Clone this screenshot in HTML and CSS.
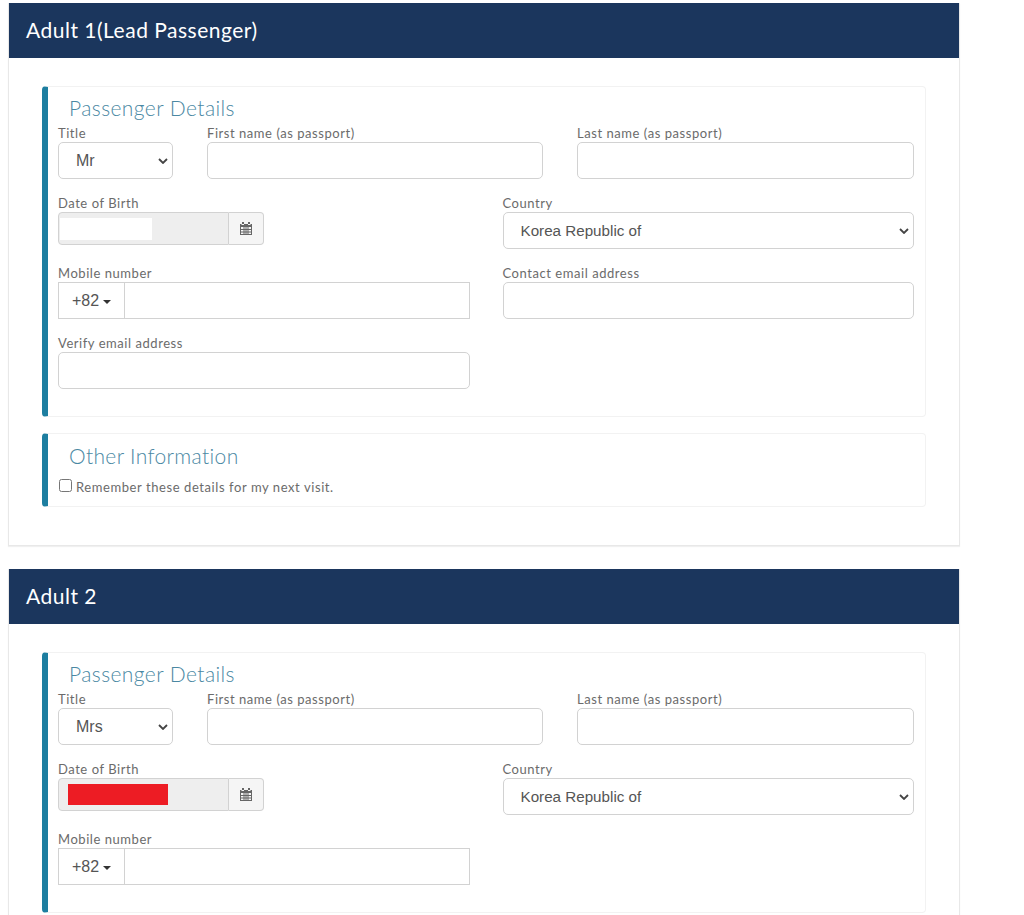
FILE: index.html
```html
<!DOCTYPE html>
<html lang="en">
<head>
  <meta charset="UTF-8" />
  <title>Passenger Details</title>
  <meta name="viewport" content="width=device-width, initial-scale=1.0" />
  <link rel="stylesheet" href="styles.css">
</head>
<body>
  <div class="card">
    <h2 class="card-title">Adult 1(Lead Passenger)</h2>
    <div class="card-body">
      <div class="panel">
        <h3>Passenger Details</h3>
        <div class="row row-name">
          <div class="field">
            <label>Title</label>
            <select class="control title-select"><option>Mr</option><option>Mrs</option></select>
          </div>
          <div class="field">
            <label>First name (as passport)</label>
            <input class="control" type="text" />
          </div>
          <div class="field">
            <label>Last name (as passport)</label>
            <input class="control" type="text" />
          </div>
        </div>
        <div class="row">
          <div class="field">
            <label>Date of Birth</label>
            <div class="date-group">
              <div class="date-input pad-small"><span class="mask mask-white"></span></div>
              <span class="date-addon">
                <svg width="12" height="13" viewBox="0 0 12 13"><path fill="#666" d="M2 0h2v2H2zM8 0h2v2H8zM0 2h1.5v1H4V2h4v1h2.5V2H12v11H0zM1 5v7h10V5z"/><path fill="#666" d="M3.5 5h1v7h-1zM5.5 5h1v7h-1zM7.5 5h1v7h-1zM1 7h10v1H1zM1 9.5h10v1H1z"/></svg>
              </span>
            </div>
          </div>
          <div class="field">
            <label>Country</label>
            <select class="control country-select"><option>Korea Republic of</option></select>
          </div>
        </div>
        <div class="row">
          <div class="field">
            <label>Mobile number</label>
            <div class="phone-group">
              <span class="phone-code">+82 <i class="caret"></i></span>
              <input type="text" />
            </div>
          </div>
          <div class="field">
            <label>Contact email address</label>
            <input class="control" type="text" />
          </div>
        </div>
        <div class="row">
          <div class="field">
            <label>Verify email address</label>
            <input class="control" type="text" />
          </div>
        </div>
      </div>

      <div class="panel panel-other">
        <h3>Other Information</h3>
        <div class="remember">
          <input type="checkbox" id="remember" />
          <label for="remember">Remember these details for my next visit.</label>
        </div>
      </div>
    </div>
  </div>

  <div class="card">
    <h2 class="card-title">Adult 2</h2>
    <div class="card-body">
      <div class="panel">
        <h3>Passenger Details</h3>
        <div class="row row-name">
          <div class="field">
            <label>Title</label>
            <select class="control title-select"><option>Mrs</option><option>Mr</option></select>
          </div>
          <div class="field">
            <label>First name (as passport)</label>
            <input class="control" type="text" />
          </div>
          <div class="field">
            <label>Last name (as passport)</label>
            <input class="control" type="text" />
          </div>
        </div>
        <div class="row">
          <div class="field">
            <label>Date of Birth</label>
            <div class="date-group">
              <div class="date-input"><span class="mask mask-red"></span></div>
              <span class="date-addon">
                <svg width="12" height="13" viewBox="0 0 12 13"><path fill="#666" d="M2 0h2v2H2zM8 0h2v2H8zM0 2h1.5v1H4V2h4v1h2.5V2H12v11H0zM1 5v7h10V5z"/><path fill="#666" d="M3.5 5h1v7h-1zM5.5 5h1v7h-1zM7.5 5h1v7h-1zM1 7h10v1H1zM1 9.5h10v1H1z"/></svg>
              </span>
            </div>
          </div>
          <div class="field">
            <label>Country</label>
            <select class="control country-select"><option>Korea Republic of</option></select>
          </div>
        </div>
        <div class="row">
          <div class="field">
            <label>Mobile number</label>
            <div class="phone-group">
              <span class="phone-code">+82 <i class="caret"></i></span>
              <input type="text" />
            </div>
          </div>
        </div>
      </div>
    </div>
  </div>
</body>
</html>
```

FILE: styles.css
```css
* {
  box-sizing: border-box;
}

html, body {
  height: 915px;
  overflow: hidden;
}

body {
  margin: 0;
  padding: 3px 64px 0 8px;
  background-color: #fff;
  font-family: Lato, "Open Sans", sans-serif;
  color: #6b6b6b;
}

.card {
  border: 1px solid #e8e8e8;
  border-top: none;
  margin-bottom: 23px;
  box-shadow: 0 1px 1px rgba(0, 0, 0, 0.06);
}

.card-title {
  height: 55px;
  margin: 0;
  padding-left: 17px;
  background-color: #1b365d;
  color: #fff;
  font-size: 21px;
  font-weight: 400;
  line-height: 54px;
  letter-spacing: 0.5px;
}

.card-body {
  padding: 28px 33px 38px;
}

.panel {
  border: 1px solid #f2f2f2;
  border-left: 6px solid #1d7ea0;
  border-radius: 4px;
  padding: 0 11px 10px 10px;
}

.panel h3 {
  height: 39px;
  margin: 0;
  padding-left: 11px;
  color: #4a88a3;
  font-size: 21px;
  font-weight: 300;
  line-height: 41px;
  letter-spacing: 0.42px;
}

.panel-other {
  margin-top: 16px;
  padding-bottom: 11px;
}

.panel-other h3 {
  height: 45px;
  line-height: 43px;
  letter-spacing: 0.35px;
}

.row {
  display: grid;
  grid-template-columns: 1fr 1fr;
  column-gap: 33px;
  height: 70px;
}

.row-name {
  grid-template-columns: 115px 336px 1fr;
  column-gap: 34px;
}

.field label {
  display: block;
  height: 16px;
  font-size: 13px;
  line-height: 14px;
  letter-spacing: 0.55px;
}

.control {
  display: block;
  width: 100%;
  height: 37px;
  border: 1px solid #d2d2d2;
  border-radius: 5px;
  background-color: #fff;
  color: #555;
  font-family: "Liberation Sans", Arial, sans-serif;
  font-size: 16px;
}

.title-select, .country-select {
  appearance: none;
  padding-left: 17px;
  background-image: url("data:image/svg+xml,%3Csvg xmlns='http://www.w3.org/2000/svg' width='10' height='6'%3E%3Cpath d='M1 1l4 4 4-4' fill='none' stroke='%23444' stroke-width='1.8'/%3E%3C/svg%3E");
  background-repeat: no-repeat;
  background-position: right 4px center;
}

.country-select {
  font-size: 15.2px;
}

.date-group {
  display: flex;
  width: 206px;
  height: 33px;
}

.date-input {
  display: flex;
  align-items: center;
  width: 171px;
  padding-left: 9px;
  background-color: #eee;
  border: 1px solid #d2d2d2;
  border-radius: 4px 0 0 4px;
}

.pad-small {
  padding-left: 1px;
}

.mask {
  display: block;
}

.mask-white {
  width: 92px;
  height: 22px;
  background-color: #fff;
}

.mask-red {
  width: 100px;
  height: 21px;
  background-color: #ed1c24;
}

.date-addon {
  display: flex;
  align-items: center;
  justify-content: center;
  width: 35px;
  background-color: #f5f5f5;
  border: 1px solid #d2d2d2;
  border-left: none;
  border-radius: 0 4px 4px 0;
}

.phone-group {
  display: flex;
  height: 37px;
  border: 1px solid #d2d2d2;
}

.phone-code {
  display: flex;
  align-items: center;
  justify-content: center;
  gap: 4px;
  width: 66px;
  border-right: 1px solid #d2d2d2;
  color: #555;
  font-family: "Liberation Sans", Arial, sans-serif;
  font-size: 16px;
}

.caret {
  width: 0;
  height: 0;
  margin-top: 2px;
  border-top: 4px solid #333;
  border-left: 4px solid transparent;
  border-right: 4px solid transparent;
}

.phone-group input {
  flex: 1;
  min-width: 0;
  border: none;
  background: transparent;
}

.remember {
  display: flex;
  align-items: center;
  gap: 4px;
  font-size: 13px;
  letter-spacing: 0.58px;
}

.remember input {
  width: 13px;
  height: 13px;
  margin: -4px 0 0 1px;
}
```
